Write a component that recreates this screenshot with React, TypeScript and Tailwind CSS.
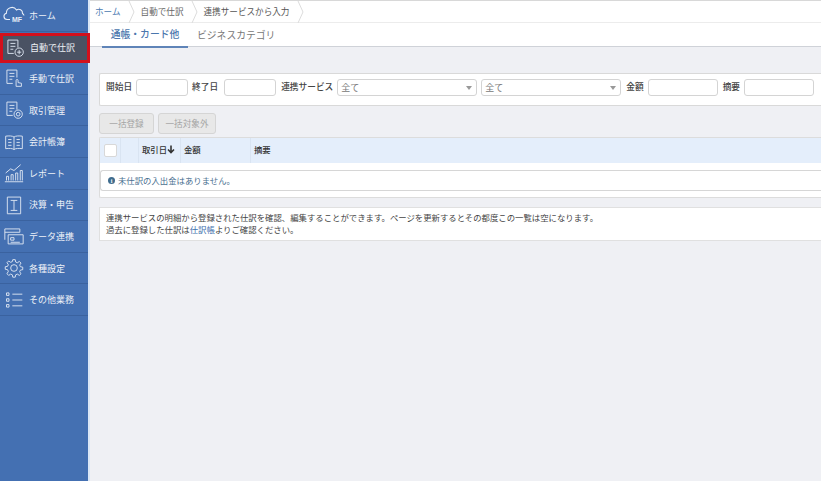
import React from "react";

const jp = { fontFamily: '"Noto Sans CJK JP", "Liberation Sans", sans-serif' };

const I = ({ children }: { children: React.ReactNode }) => (
  <svg width="20" height="20" viewBox="0 0 24 24" fill="none" stroke="#dfe7f3" strokeWidth="1.1" className="shrink-0">
    {children}
  </svg>
);

const Doc = () => (
  <>
    <path d="M3.500 2.500h12v9M3.500 2.500v16h7" />
    <path d="M6.500 6.500h6M6.500 10h6M6.500 13.500h3.500" />
  </>
);

const items: { label: string; icon: React.ReactNode; active?: boolean }[] = [
  {
    label: "ホーム",
    icon: (
      <svg width="22" height="20" viewBox="0 0 22 20" fill="none" stroke="#e6edf7" strokeWidth="1.1" className="shrink-0 -ml-[1px] mr-[-1px]">
        <path d="M7 14.500H4a3.200 3.200 0 0 1-.6-6.300A5.500 5.500 0 0 1 13.500 5a3.800 3.800 0 0 1 6 3.500 3 3 0 0 1 1.500 2" />
        <text x="9" y="17" fontSize="7" fontWeight="700" fill="#e6edf7" stroke="none" fontFamily="Liberation Sans">MF</text>
      </svg>
    ),
  },
  {
    label: "自動で仕訳",
    active: true,
    icon: (
      <I>
        <Doc />
        <circle cx="17" cy="17" r="5" />
        <path d="M17 14.500v5M14.500 17h5" />
      </I>
    ),
  },
  {
    label: "手動で仕訳",
    icon: (
      <I>
        <Doc />
        <path d="M14.500 22v-7a1.200 1.200 0 0 1 2.400 0v2.500l4 .8V22z" />
      </I>
    ),
  },
  {
    label: "取引管理",
    icon: (
      <I>
        <Doc />
        <circle cx="17" cy="17" r="5" />
        <circle cx="17" cy="17" r="2.200" />
      </I>
    ),
  },
  {
    label: "会計帳簿",
    icon: (
      <I>
        <path d="M12 6C10 4.500 6 4.500 2 5v15c4-.5 8-.5 10 1 2-1.500 6-1.500 10-1V5c-4-.5-8-.5-10 1zM12 6v15" />
        <path d="M5 9h4M5 12.500h4M5 16h4M15 9h4M15 12.500h4M15 16h4" />
      </I>
    ),
  },
  {
    label: "レポート",
    icon: (
      <I>
        <path d="M1 22.500h22M3 21v-5h2.500v5M8.500 21v-7H11v7M14 21v-9h2.500v9M19.500 21V9H22v12" />
        <path d="M2 12l6-5 4 2 8-7" />
      </I>
    ),
  },
  {
    label: "決算・申告",
    icon: (
      <I>
        <path d="M4 2.500h16v20H4zM8 6.500h8M12 6.500v12M8 18.500h8" />
      </I>
    ),
  },
  {
    label: "データ連携",
    icon: (
      <I>
        <path d="M1 16.500V3.500h18v4M1 7.500h18" />
        <path d="M5 10.500h18v11H5zM8 14h4v3H8zM8 19.500h11" />
      </I>
    ),
  },
  {
    label: "各種設定",
    icon: (
      <I>
        <circle cx="12" cy="12" r="4" />
        <path d="M10.500 2h3l.5 2.800 2 .9 2.400-1.600 2 2L18.800 8.500l.9 2 2.800.5v3l-2.800.5-.9 2 1.600 2.400-2 2-2.400-1.600-2 .9-.5 2.800h-3l-.5-2.800-2-.9-2.400 1.600-2-2L5.200 16l-.9-2-2.800-.5v-3l2.800-.5.9-2-1.600-2.400 2-2 2.400 1.600 2-.9z" />
      </I>
    ),
  },
  {
    label: "その他業務",
    icon: (
      <I>
        <path d="M3 3.500h3v3H3zM3 10.500h3v3H3zM3 17.500h3v3H3zM10 5h12M10 12h12M10 19h12" />
      </I>
    ),
  },
];

const Field = ({ className }: { className: string }) => (
  <div className={`h-[17px] bg-white border border-[#d4d4d4] rounded-[3px] shrink-0 ${className}`} />
);

const Sel = ({ className }: { className: string }) => (
  <div className={`h-[17px] bg-white border border-[#d4d4d4] rounded-[3px] shrink-0 flex items-center justify-between pl-[3px] pr-[4px] text-[#777] ${className}`}>
    <span className="text-[9px] leading-none">全て</span>
    <span className="w-0 h-0 border-l-[3px] border-r-[3px] border-t-[4px] border-l-transparent border-r-transparent border-t-[#999]" />
  </div>
);

const Chevron = () => (
  <svg width="7" height="22" viewBox="0 0 7 22" fill="none" stroke="#dcdcdc" className="shrink-0">
    <path d="M1 0l5 11-5 11" />
  </svg>
);

export default function App() {
  return (
    <div className="w-[821px] h-[481px] flex overflow-hidden bg-[#eff0f4] text-[#333]" style={jp}>
      <aside className="w-[88px] shrink-0 bg-[#4470b2] flex flex-col">
        {items.map((it) => (
          <div
            key={it.label}
            className={`shrink-0 flex items-center gap-[5px] text-[9px] leading-none ${
              it.active
                ? "h-[30.6px] mt-[1px] bg-[#4a5263] text-[#eef1f6] border-[3px] border-[#d3101c] w-[90px] relative z-10 pl-[2px]"
                : "h-[31.6px] border-b border-[#3a629f] text-[#eef2f8] pl-[4px]"
            }`}
          >
            {it.icon}
            <span className="whitespace-nowrap">{it.label}</span>
          </div>
        ))}
      </aside>

      <main className="flex-1 min-w-0 flex flex-col border-l-2 border-[#dbe7f6]">
        <div className="bg-white border-t border-[#d8d8d8] h-[47px] shrink-0 border-b border-b-[#cfd2d8]">
          <div className="h-[22px] flex items-center border-b border-[#ececec] text-[8.6px] leading-none pl-[5px]">
            <span className="text-[#4a7ab0]">ホーム</span>
            <span className="ml-[7px]"><Chevron /></span>
            <span className="ml-[6px] text-[#666]">自動で仕訳</span>
            <span className="ml-[7px]"><Chevron /></span>
            <span className="ml-[6px] text-[#555]">連携サービスから入力</span>
            <span className="ml-[8px]"><Chevron /></span>
          </div>
          <div className="flex h-[24px] text-[9.8px] leading-none pl-[12px]">
            <div className="w-[86px] flex items-center justify-center border-b-2 border-[#5f84b8] text-[#4a76ad] font-medium h-[25px] pt-[1px]">通帳・カード他</div>
            <div className="ml-[9px] flex items-center text-[#777] h-[24px] pt-[1px]">ビジネスカテゴリ</div>
          </div>
        </div>

        <div className="flex-1 pl-[9px] pt-[26px] flex flex-col">
          <div className="h-[33px] bg-white border border-[#d9d9d9] rounded-l-[2px] border-r-0 flex items-center pl-[6px] pb-[4px] text-[8.7px] leading-none text-[#444] font-medium">
            <span className="whitespace-nowrap">開始日</span>
            <Field className="w-[52px] ml-[4px]" />
            <span className="ml-[4px] whitespace-nowrap">終了日</span>
            <Field className="w-[52px] ml-[6px]" />
            <span className="ml-[5px] whitespace-nowrap">連携サービス</span>
            <Sel className="w-[140px] ml-[4px] font-normal" />
            <Sel className="w-[140px] ml-[4px] font-normal" />
            <span className="ml-[5px] whitespace-nowrap">金額</span>
            <Field className="w-[70px] ml-[4px]" />
            <span className="ml-[5px] whitespace-nowrap">摘要</span>
            <Field className="w-[70px] ml-[4px]" />
          </div>

          <div className="flex mt-[7px] gap-[4px] text-[8.6px] leading-none text-[#a5a5a5]">
            <div className="w-[55px] h-[21px] bg-[#e8e8e8] border border-[#d5d5d5] rounded-[3px] flex items-center justify-center">一括登録</div>
            <div className="w-[58px] h-[21px] bg-[#e8e8e8] border border-[#d5d5d5] rounded-[3px] flex items-center justify-center">一括対象外</div>
          </div>

          <div className="mt-[3px] bg-white border border-[#dcdcdc] border-r-0 rounded-l-[2px] h-[61px]">
            <div className="h-[25px] bg-[#e4eefb] flex items-center text-[8.4px] leading-none font-medium text-[#333]">
              <div className="w-[21px] h-full flex items-center justify-center border-r border-[#d9e4f2]">
                <div className="w-[13px] h-[13px] bg-white border border-[#d8d8d8] rounded-[2px]" />
              </div>
              <div className="w-[18px] h-full border-r border-[#d9e4f2]" />
              <div className="w-[42px] h-full flex items-center pl-[3px] pb-[2px] border-r border-[#d9e4f2] whitespace-nowrap">
                取引日
                <svg width="8" height="9" viewBox="0 0 8 9" fill="none" stroke="#333" strokeWidth="1.600"><path d="M4 0.500v7M1 4.500l3 3 3-3" /></svg>
              </div>
              <div className="w-[70px] h-full flex items-center pl-[3px] pb-[2px] border-r border-[#d9e4f2]">金額</div>
              <div className="pl-[3px] pb-[2px]">摘要</div>
            </div>
            <div className="mt-[7px] h-[21px] bg-white border border-[#d6d6d6] border-r-0 rounded-l-[3px] flex items-center pl-[7px] gap-[2px] text-[8.4px] leading-none text-[#4a6f8f]">
              <span className="w-[7px] h-[7px] rounded-full bg-[#3f6c8e] text-white text-[6px] font-bold flex items-center justify-center" style={{ fontFamily: '"Liberation Serif", serif' }}>i</span>
              <span className="ml-[1px]">未仕訳の入出金はありません。</span>
            </div>
          </div>

          <div className="mt-[9px] h-[34px] bg-white border border-[#e0e0e0] border-r-0 flex flex-col justify-center pl-[6px] pb-[2px] text-[8.4px] leading-[12px] text-[#444] whitespace-nowrap">
            <div>連携サービスの明細から登録された仕訳を確認、編集することができます。ページを更新するとその都度この一覧は空になります。</div>
            <div>過去に登録した仕訳は<span className="text-[#3f72ad]">仕訳帳</span>よりご確認ください。</div>
          </div>
        </div>
      </main>
    </div>
  );
}
